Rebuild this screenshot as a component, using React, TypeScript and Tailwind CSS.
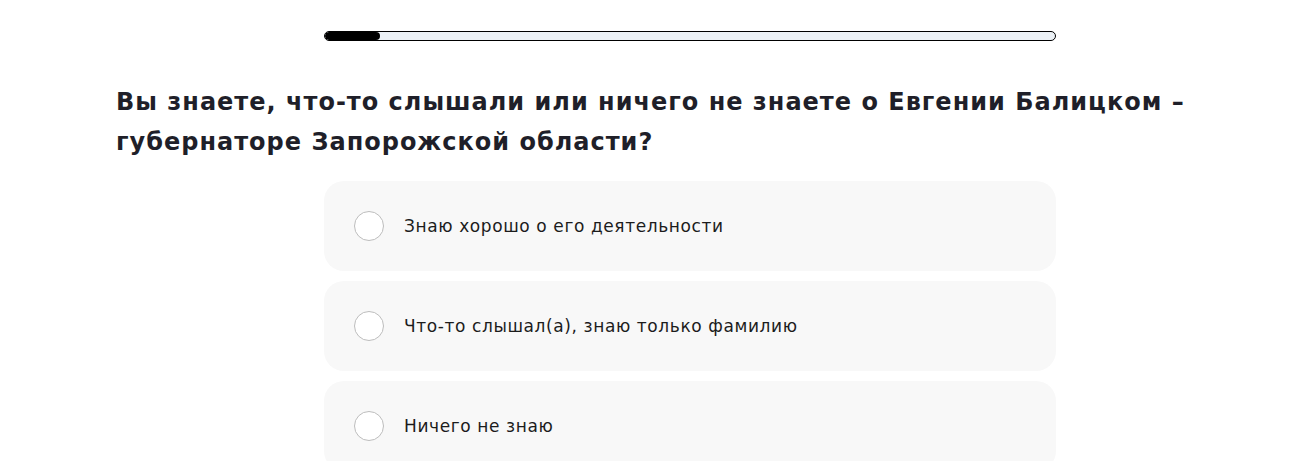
import { useState } from 'react';

const options = [
  'Знаю хорошо о его деятельности',
  'Что-то слышал(а), знаю только фамилию',
  'Ничего не знаю',
];

export default function App() {
  const [selected, setSelected] = useState<number | null>(null);

  return (
    <div className="min-h-screen bg-white font-['DejaVu_Sans',sans-serif] text-[#1f1f29]">
      <div className="w-[1148px] ml-[116px] pt-[31px]">
        {/* progress */}
        <div className="mx-auto w-[732px] h-[10px] rounded-full border border-black bg-[#ecf1f6] overflow-hidden">
          <div className="h-full w-[55px] rounded-full bg-black" />
        </div>

        <h1 className="mt-[41px] text-[24px] leading-[40px] font-bold tracking-[1px]">
          Вы знаете, что-то слышали или ничего не знаете о Евгении Балицком –
          <br />
          губернаторе Запорожской области?
        </h1>

        <div className="mx-auto mt-[19px] w-[732px] flex flex-col gap-[10px]">
          {options.map((label, i) => (
            <label
              key={label}
              onClick={() => setSelected(i)}
              className="flex items-center h-[90px] px-[30px] rounded-[20px] bg-[#f8f8f8] cursor-pointer"
            >
              <span className="flex items-center justify-center w-[30px] h-[30px] rounded-full border border-[#bdbdbd] bg-white shrink-0">
                {selected === i && <span className="w-[14px] h-[14px] rounded-full bg-black" />}
              </span>
              <span className="ml-[20px] pt-[1px] text-[17px] tracking-[0.6px] text-[#1c1c1c]">{label}</span>
            </label>
          ))}
        </div>
      </div>
    </div>
  );
}
